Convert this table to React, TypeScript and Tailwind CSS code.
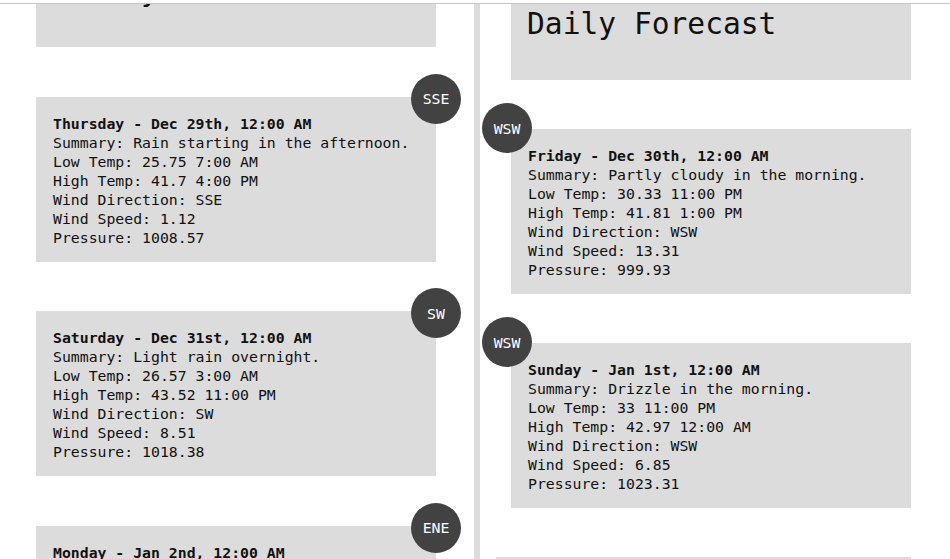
import React from "react";

type Day = {
  title: string;
  summary: string;
  low: string;
  high: string;
  dir: string;
  speed: string;
  pressure: string;
};

const left: Day[] = [
  { title: "Thursday - Dec 29th, 12:00 AM", summary: "Rain starting in the afternoon.", low: "25.75 7:00 AM", high: "41.7 4:00 PM", dir: "SSE", speed: "1.12", pressure: "1008.57" },
  { title: "Saturday - Dec 31st, 12:00 AM", summary: "Light rain overnight.", low: "26.57 3:00 AM", high: "43.52 11:00 PM", dir: "SW", speed: "8.51", pressure: "1018.38" },
  { title: "Monday - Jan 2nd, 12:00 AM", summary: "Rain until afternoon.", low: "31.2 11:00 PM", high: "44.1 1:00 PM", dir: "ENE", speed: "5.02", pressure: "1012.4" },
];

const right: Day[] = [
  { title: "Friday - Dec 30th, 12:00 AM", summary: "Partly cloudy in the morning.", low: "30.33 11:00 PM", high: "41.81 1:00 PM", dir: "WSW", speed: "13.31", pressure: "999.93" },
  { title: "Sunday - Jan 1st, 12:00 AM", summary: "Drizzle in the morning.", low: "33 11:00 PM", high: "42.97 12:00 AM", dir: "WSW", speed: "6.85", pressure: "1023.31" },
];

const mono = "font-['DejaVu_Sans_Mono','Liberation_Mono',monospace]";

function Card({ d, side }: { d: Day; side: "left" | "right" }) {
  return (
    <div className="relative h-[165px] shrink-0 bg-[#dcdcdc] px-[17px] pt-[17px] text-[14.8px] leading-[19px] text-[#111]">
      <div className="font-bold">{d.title}</div>
      <div>Summary: {d.summary}</div>
      <div>Low Temp: {d.low}</div>
      <div>High Temp: {d.high}</div>
      <div>Wind Direction: {d.dir}</div>
      <div>Wind Speed: {d.speed}</div>
      <div>Pressure: {d.pressure}</div>
      {side === "left" ? (
        <div className="absolute right-[-25px] top-[-23px] flex h-[50px] w-[50px] items-center justify-center rounded-full bg-[#424242] text-[14.8px] text-white">
          {d.dir}
        </div>
      ) : (
        <div className="absolute left-[-29px] top-[-26px] flex h-[50px] w-[50px] items-center justify-center rounded-full bg-[#424242] text-[14.8px] text-white">
          {d.dir}
        </div>
      )}
    </div>
  );
}

function Header({ text }: { text: string }) {
  return (
    <div className="h-[76px] shrink-0 bg-[#dcdcdc] pl-[16px] pt-[2px]">
      <div className="text-[29.6px] leading-[36px] text-[#111]">{text}</div>
    </div>
  );
}

export default function App() {
  return (
    <div className={`h-[559px] w-[950px] overflow-hidden bg-white ${mono}`}>
      <div className="h-[4px] border-b border-[#c4c4c4]" />
      <div className="flex h-[555px] overflow-hidden pl-[36px]">
        <div className="-mt-[33px] flex w-[400px] shrink-0 flex-col gap-[49.5px]">
          <Header text="Hourly Forecast" />
          {left.map((d) => (
            <Card key={d.title} d={d} side="left" />
          ))}
        </div>
        <div className="ml-[38px] w-[6px] shrink-0 bg-[#dcdcdc]" />
        <div className="ml-[31px] flex w-[400px] shrink-0 flex-col gap-[49px]">
          <Header text="Daily Forecast" />
          {right.map((d) => (
            <Card key={d.title} d={d} side="right" />
          ))}
          <div className="-ml-[15px] h-[40px] w-[415px] shrink-0 bg-[#dcdcdc]" />
        </div>
      </div>
    </div>
  );
}
